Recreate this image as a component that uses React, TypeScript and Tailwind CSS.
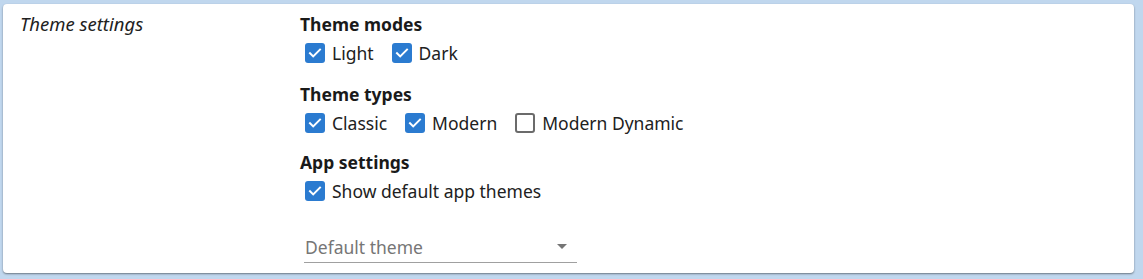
import React, { useState } from 'react';

type Option = { label: string; checked: boolean };

const Check: React.FC<{ checked: boolean; label: string; onToggle: () => void }> = ({ checked, label, onToggle }) => (
  <label className="flex items-center h-6 cursor-pointer select-none" onClick={onToggle}>
    {checked ? (
      <span className="w-[20px] h-[20px] rounded-[3px] bg-[#2b7bd0] flex items-center justify-center">
        <svg width="14" height="14" viewBox="0 0 14 14" fill="none">
          <path d="M2 7.2l3.2 3.2L12 3.6" stroke="white" strokeWidth="2" strokeLinecap="square" />
        </svg>
      </span>
    ) : (
      <span className="w-[20px] h-[20px] rounded-[3px] border-2 border-[#6b6b6b] bg-white" />
    )}
    <span className="ml-[7px] text-[17.5px] leading-6 text-[#212121]">{label}</span>
  </label>
);

const Section: React.FC<{ title: string; options: Option[]; setOptions: (o: Option[]) => void; className?: string }> = ({
  title,
  options,
  setOptions,
  className,
}) => (
  <div className={className}>
    <h3 className="text-[17.5px] leading-6 font-bold text-[#1a1a1a]">{title}</h3>
    <div className="mt-[5px] ml-[5px] flex gap-[18px]">
      {options.map((o, i) => (
        <Check
          key={o.label}
          label={o.label}
          checked={o.checked}
          onToggle={() => setOptions(options.map((x, j) => (j === i ? { ...x, checked: !x.checked } : x)))}
        />
      ))}
    </div>
  </div>
);

export default function App() {
  const [modes, setModes] = useState<Option[]>([
    { label: 'Light', checked: true },
    { label: 'Dark', checked: true },
  ]);
  const [types, setTypes] = useState<Option[]>([
    { label: 'Classic', checked: true },
    { label: 'Modern', checked: true },
    { label: 'Modern Dynamic', checked: false },
  ]);
  const [app, setApp] = useState<Option[]>([{ label: 'Show default app themes', checked: true }]);

  return (
    <div className="w-[1143px] h-[279px] bg-[#c0d7ee] pt-[4px] pl-[3px] pr-[9px]" style={{ fontFamily: '"Noto Sans", "Open Sans", sans-serif' }}>
      <div className="h-[269px] bg-white rounded-[4px] shadow-[0_1px_2px_rgba(0,0,0,0.45)] flex">
        <div className="w-[297px] pl-[17px] pt-[8px]">
          <span className="italic text-[18.5px] leading-6 text-[#212121]">Theme settings</span>
        </div>
        <div className="flex-1 pt-[8px]">
          <Section title="Theme modes" options={modes} setOptions={setModes} />
          <Section title="Theme types" options={types} setOptions={setTypes} className="mt-[17px]" />
          <Section title="App settings" options={app} setOptions={setApp} className="mt-[15px]" />
          <div className="mt-[28px] ml-[4px] w-[273px] h-[32px] border-b border-[#a0a0a0] flex items-center justify-between pr-[10px]">
            <span className="text-[17.5px] leading-6 text-[#767676] pl-[1px]">Default theme</span>
            <svg width="10" height="5" viewBox="0 0 10 5">
              <path d="M0 0h10L5 5z" fill="#757575" />
            </svg>
          </div>
        </div>
      </div>
    </div>
  );
}
